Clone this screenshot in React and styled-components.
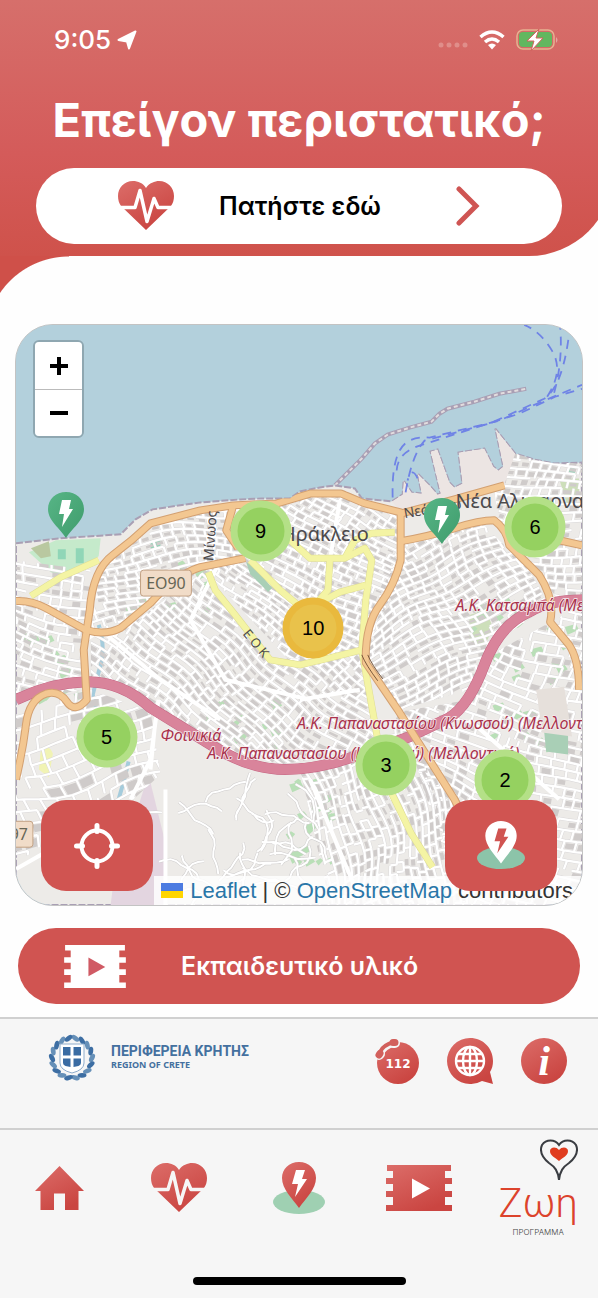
import React from 'react';
import styled, { createGlobalStyle } from 'styled-components';

const GlobalStyle = createGlobalStyle`
    * {
        box-sizing: border-box;
    }

    body {
        margin: 0;
        background: #fefefe;
        font-family: Inter, "Noto Sans", sans-serif;
        overflow-x: hidden;
    }

    button {
        font-family: inherit;
        border: 0;
        padding: 0;
        cursor: pointer;
    }

    svg {
        display: block;
        flex: none;
    }
`;

const Page = styled.div`
    overflow: hidden;
`;

const Header = styled.header`
    margin-right: -15px;
    padding: 0 51px 12px 36px;
    border-bottom-right-radius: 84px;
    background: linear-gradient(#d66f6b, #d45b5a 60%, #cf524b);
`;

const StatusBar = styled.div`
    height: 80px;
    padding: 0 4px 0 18px;
    display: flex;
    align-items: center;
    justify-content: space-between;
    color: #fff;
`;

const StatusGroup = styled.div`
    display: flex;
    align-items: center;
    gap: ${(props) => props.$gap}px;
`;

const Clock = styled.time`
    font-size: 26px;
    font-weight: 500;
    line-height: 32px;
`;

const Title = styled.h1`
    margin: 0;
    height: 88px;
    font-size: 47px;
    line-height: 80px;
    font-weight: 700;
    text-align: center;
    white-space: nowrap;
    color: #fff;
`;

const PillButton = styled.button`
    width: 100%;
    height: 76px;
    border-radius: 38px;
    display: flex;
    align-items: center;
    font-size: 25px;
    line-height: 32px;
    font-weight: 600;
    white-space: nowrap;
    color: ${(props) => (props.$filled ? '#fff' : '#000')};
    background: ${(props) => (props.$filled ? '#d05451' : '#fff')};
    padding: ${(props) => (props.$filled ? '0 46px' : '0 82px')};
    gap: ${(props) => (props.$filled ? 55 : 45)}px;

    & > svg:last-child {
        margin-left: auto;
    }
`;

const Swoop = styled.div`
    width: 84px;
    height: 68px;
    margin-left: -15px;
    background: radial-gradient(circle at 84px 84px, #fefefe 83px, #cf5049 84px);
`;

const Main = styled.main`
    padding: 0 15px 13px;
`;

const MapFrame = styled.section`
    position: relative;
    width: 100%;
    aspect-ratio: 568 / 582;
    border: 1px solid #c3c3c3;
    border-radius: 38px;
    overflow: hidden;
    background: #b3d0dc;

    & > svg {
        width: 100%;
        height: 100%;
    }
`;

const ZoomControl = styled.div`
    position: absolute;
    top: 15px;
    left: 17px;
    width: 51px;
    border: 2px solid #8fa7b1;
    border-radius: 6px;
    overflow: hidden;
`;

const ZoomButton = styled.button`
    width: 100%;
    height: 47px;
    display: flex;
    align-items: center;
    justify-content: center;
    background: #fff;

    & + & {
        border-top: 1px solid #bbb;
    }
`;

const Marker = styled.button`
    position: absolute;
    transform: translate(-50%, -50%);
    background: none;
`;

const Cluster = styled(Marker)`
    width: 61px;
    height: 61px;
    border-radius: 50%;
    border: 7px solid ${(props) => (props.$many ? '#e9b93d' : '#b4e087')};
    background: ${(props) => (props.$many ? '#e9c24b' : '#95d160')};
    font-family: "Liberation Sans", sans-serif;
    font-size: 20px;
    line-height: 47px;
    color: #000;
`;

const Attribution = styled.div`
    position: absolute;
    right: 0;
    bottom: 0;
    height: 29px;
    padding: 0 9px 0 7px;
    display: flex;
    align-items: center;
    gap: 7px;
    background: rgba(255, 255, 255, 0.82);
    font-family: "Liberation Sans", sans-serif;
    font-size: 22px;
    line-height: 28px;
    white-space: nowrap;
    color: #333;

    a {
        color: #2a76a8;
        text-decoration: none;
    }
`;

const MapButton = styled.button`
    position: absolute;
    bottom: 14px;
    ${(props) => props.$side}: 25px;
    width: 112px;
    height: 91px;
    border-radius: 25px;
    display: flex;
    align-items: center;
    justify-content: center;
    background: #d05451;
`;

const PillRow = styled.div`
    padding: 22px 3px 0;
`;

const Footer = styled.footer`
    padding-bottom: 13px;
    background: #f6f6f6;
`;

const Partners = styled.div`
    height: 111px;
    padding: 15px 31px 0 48px;
    border-top: 2px solid #d0d0d0;
    display: flex;
    align-items: flex-start;
    justify-content: space-between;
`;

const Region = styled.a`
    display: flex;
    gap: 15px;
    color: #44709f;
    text-decoration: none;
`;

const RegionText = styled.span`
    display: flex;
    flex-direction: column;
    padding-top: 9px;
    font-weight: 700;
    white-space: nowrap;
`;

const RegionName = styled.span`
    font-family: Roboto, sans-serif;
    font-size: 14px;
    line-height: 16px;
`;

const RegionSub = styled.span`
    font-family: "Noto Sans", sans-serif;
    font-size: 9px;
    line-height: 12px;
`;

const QuickLinks = styled.div`
    display: flex;
    gap: 28px;
    padding-top: 4px;
`;

const Nav = styled.nav`
    height: 149px;
    padding-top: 8px;
    border-top: 2px solid #d0d0d0;
    display: grid;
    grid-template-columns: repeat(5, 1fr);
`;

const NavLink = styled.a`
    height: 100px;
    display: flex;
    align-items: center;
    justify-content: center;
    color: inherit;
    text-decoration: none;
`;

const ZoeMark = styled.span`
    display: flex;
    flex-direction: column;
    align-items: center;
`;

const ZoeHeart = styled.svg`
    align-self: flex-end;
`;

const ZoeName = styled.span`
    font-family: Roboto, sans-serif;
    font-weight: 300;
    font-size: 40px;
    line-height: 46px;
    color: #dc432c;
`;

const ZoeSub = styled.span`
    font-size: 8px;
    line-height: 10px;
    font-weight: 300;
    color: #444;
`;

const HomeIndicator = styled.div`
    width: 213px;
    height: 8px;
    margin: 0 auto;
    border-radius: 4px;
    background: #000;
`;

/* ---------- icons ---------- */

const IconDefs = () => (
  <svg width="0" height="0" style={{ position: 'absolute' }} aria-hidden="true">
    <defs>
      <linearGradient id="red" x1="0" y1="0" x2="0.6" y2="1">
        <stop offset="0" stopColor="#dc6d69" />
        <stop offset="1" stopColor="#ca4541" />
      </linearGradient>
      <linearGradient id="green" x1="0" y1="0" x2="1" y2="1">
        <stop offset="0" stopColor="#57b586" />
        <stop offset="1" stopColor="#3f9c6c" />
      </linearGradient>
    </defs>
  </svg>
);

const HeartPulse = ({ line = '#fff', width = 56 }) => (
  <svg width={width} height="50" viewBox="0 0 56 50">
    <path fill="url(#red)" d="M28 7C31 2 37 0 41 0c9 0 15 7 15 15 0 4-1 7-3 10L28 49 3 25c-2-3-3-6-3-10C0 7 6 0 15 0c5 0 10 2 13 7z" />
    <path fill="none" stroke={line} strokeWidth="3.500" strokeLinejoin="round" d="M0 26.500h17l5-17 7 31 7-23 4 9h16" />
  </svg>
);

const Film = ({ color = 'url(#red)', play = '#fff', width = 66, height = 46 }) => (
  <svg width={width} height={height} viewBox="0 0 66 46">
    <path fill={color} d="M1 0h64v6h-6v7h7v6h-7v7h7v6h-7v8h7v6H0v-6h7v-8H0v-6h7v-7H0v-6h7V6H1z" />
    <path fill={play} d="M26 13.500l18 10-18 10z" />
  </svg>
);

const HomeIcon = () => (
  <svg width="49" height="44" viewBox="0 0 49 44">
    <path fill="url(#red)" d="M24.500 0L49 25h-5.500v19H30V27.500H19V44H5.500V25H0z" />
  </svg>
);

const BoltPin = ({ pin = 'url(#red)', bolt = '#fff', base = '#9fd0b2', width = 52 }) => (
  <svg width={width} height="53" viewBox="0 0 52 53">
    <ellipse cx="26" cy="40" rx="26" ry="12" fill={base} />
    <path fill={pin} d="M26 0c10 0 17 7 17 16 0 11-10 20-17 30C19 36 9 27 9 16 9 7 16 0 26 0z" />
    <path fill={bolt} d="M23 8h9l-3 9h5L22 35l3-13h-6z" />
  </svg>
);

const GreenPin = () => (
  <svg width="36" height="46" viewBox="0 0 36 46">
    <path fill="url(#green)" d="M18 0c10 0 18 7 18 17 0 12-12 19-18 29C12 36 0 29 0 17 0 7 8 0 18 0z" />
    <path fill="#fff" d="M14 8h9l-2 9h4L14 35l2-13h-5z" />
  </svg>
);

const Crosshair = () => (
  <svg width="46" height="46" viewBox="0 0 46 46" fill="none" stroke="#fff" strokeLinecap="round">
    <circle cx="23" cy="23" r="15.500" strokeWidth="4" />
    <path strokeWidth="5" d="M23 2.500v6M23 37.500v6M2.500 23h6M37.500 23h6" />
  </svg>
);

const Phone112 = () => (
  <svg width="46" height="46" viewBox="0 0 46 46">
    <circle cx="25" cy="25" r="21" fill="url(#red)" />
    <g fill="none" strokeLinecap="round">
      <path stroke="#f6f6f6" strokeWidth="10" d="M7 16l-1 1M20 5l2 0" />
      <path stroke="#f6f6f6" strokeWidth="7" d="M7 16Q10 8 21 5" />
      <path stroke="#d2605c" strokeWidth="7" d="M7 15.500l-1 1.500M20 4.500l2 0" />
      <path stroke="#d2605c" strokeWidth="4" d="M7 14Q10 7 21 4" />
    </g>
    <text x="25" y="30" textAnchor="middle" fill="#fff" fontFamily="DejaVu Sans" fontWeight="700" fontSize="12">112</text>
  </svg>
);

const GlobeBubble = () => (
  <svg width="46" height="46" viewBox="0 0 46 46">
    <path fill="url(#red)" d="M23 0c13 0 23 10 23 23 0 4-1 8-3 11l3 12-11-3a23 23 0 0 1-12 3A23 23 0 0 1 23 0z" />
    <g fill="none" stroke="#fff" strokeWidth="2.400">
      <circle cx="23" cy="23" r="14" />
      <ellipse cx="23" cy="23" rx="7" ry="14" />
      <path d="M23 9v28M9 23h28M11 16h24M11 30h24" />
    </g>
  </svg>
);

const InfoIcon = () => (
  <svg width="46" height="46" viewBox="0 0 46 46">
    <circle cx="23" cy="23" r="23" fill="url(#red)" />
    <text x="23" y="37" textAnchor="middle" fill="#fff" fontFamily="Liberation Serif" fontStyle="italic" fontWeight="700" fontSize="42">i</text>
  </svg>
);

const leaves = Array.from({ length: 18 }, (_, i) => 10 + i * 20);

const Emblem = () => (
  <svg width="48" height="48" viewBox="0 0 48 48">
    {leaves.map((angle, i) => (
      <ellipse
        key={angle}
        cx="24"
        cy="4"
        rx="4.500"
        ry="2.400"
        fill={i % 2 ? '#3d6ea3' : '#6690b8'}
        transform={`rotate(${angle} 24 24) rotate(${i > 8 ? -28 : 28} 24 4)`}
      />
    ))}
    <path fill="#fff" stroke="#8eaccb" strokeWidth="1" d="M12 10h24v19q0 7-12 10-12-3-12-10z" />
    <path fill="#3a6ca3" d="M15 13h7.500v8.500H15zM25.500 13H33v8.500h-7.500zM15 24.500h7.500V33l-5-1q-2.500-1-2.500-3zM25.500 24.500H33V29q0 2-2.500 3l-5 1z" />
  </svg>
);

const LocationArrow = () => (
  <svg width="20" height="20" viewBox="0 0 20 20">
    <path fill="#fff" stroke="#fff" strokeWidth="2" strokeLinejoin="round" d="M18.500 1.500L12 18.500l-2-7-8.500-1.500z" />
  </svg>
);

const Wifi = () => (
  <svg width="26" height="20" viewBox="0 0 26 20" fill="none" stroke="#fff" strokeWidth="3.500">
    <path d="M1.500 7Q13-3 24.500 7" />
    <path d="M6 12q7-6 14 0" />
    <path fill="#fff" stroke="none" d="M9 15q4-3 8 0l-4 4.500z" />
  </svg>
);

const Battery = () => (
  <svg width="42" height="22" viewBox="0 0 42 22">
    <rect x="1" y="1" width="37" height="19" rx="6" fill="none" stroke="#e6b291" strokeWidth="1.500" />
    <rect x="3" y="3" width="33" height="15" rx="4" fill="#62b75f" />
    <path fill="#e6a5a0" d="M40 8q3 3 0 6z" />
    <path fill="#fff" stroke="#d2655f" strokeWidth="1" d="M23 0L11 12h7l-3 10L27 9h-7z" />
  </svg>
);

const SignalDots = () => (
  <svg width="30" height="16" viewBox="0 0 30 16" fill="#e08e8a">
    <circle cx="3" cy="13" r="2.500" />
    <circle cx="11" cy="13" r="2.500" />
    <circle cx="19" cy="13" r="2.500" />
    <circle cx="27" cy="13" r="2.500" />
  </svg>
);

const Flag = () => (
  <svg width="22" height="15" viewBox="0 0 22 15">
    <path fill="#4c7be1" d="M0 0h22v8H0z" />
    <path fill="#ffd500" d="M0 8h22v7H0z" />
  </svg>
);

/* ---------- map ---------- */

const makeRandom = (seed) => () => {
  seed = (seed * 16807) % 2147483647;
  return seed / 2147483647;
};

// bends a straight grid a little so that the blocks look like an old town
const warp = (x, y) => [
  x + 5 * Math.sin(y / 31) + 3 * Math.sin((x + y) / 19),
  y + 5 * Math.sin(x / 37) + 3 * Math.cos((x - y) / 23),
];

const pt = (p) => `${p[0].toFixed(1)} ${p[1].toFixed(1)}`;

const makeDistrict = ({ box, angle, w, h, seed, fill }) => {
  const random = makeRandom(seed);
  const [x0, y0, x1, y1] = box;
  const cx = (x0 + x1) / 2;
  const cy = (y0 + y1) / 2;
  const reach = Math.hypot(x1 - x0, y1 - y0) / 2;
  const cos = Math.cos((angle * Math.PI) / 180);
  const sin = Math.sin((angle * Math.PI) / 180);
  const at = (u, v) => warp(cx + u * cos - v * sin, cy + u * sin + v * cos);
  let blocks = '';
  let streets = '';
  for (let v = -reach; v < reach; v += h) {
    const shift = random() * w;
    for (let u = -reach - shift; u < reach; u += w) {
      const p = at(u, v);
      if (p[0] < x0 - w || p[0] > x1 + w || p[1] < y0 - w || p[1] > y1 + w) continue;
      if (random() < fill) {
        const a = 1.5 + random();
        const b = w - 1 - random() * 2;
        const c = h - 1 - random() * 2;
        blocks += `M${pt(at(u + a, v + a))}L${pt(at(u + b, v + a))} ${pt(at(u + b, v + c))} ${pt(at(u + a, v + c))}z`;
      }
      if (random() < 0.85) streets += `M${pt(at(u, v))}L${pt(at(u + w, v))}`;
      if (random() < 0.75) streets += `M${pt(at(u, v))}L${pt(at(u, v + h))}`;
    }
  }
  return { blocks, streets };
};

const districts = [
  { shape: 'M15 560L90 570 85 690 15 700z', box: [15, 555, 92, 700], angle: 12, w: 12, h: 8, seed: 11, fill: 0.5 },
  { shape: 'M100 565L150 520 250 505 245 560 200 570 120 632 90 632z', box: [88, 500, 252, 635], angle: -8, w: 10, h: 7, seed: 23, fill: 0.85 },
  { shape: 'M250 505L345 490 400 515 398 580 366 655 290 662 205 570 240 555z', box: [200, 485, 402, 665], angle: 32, w: 10, h: 7, seed: 37, fill: 0.85 },
  { shape: 'M90 635L120 632 205 570 268 660 366 655 378 750 280 765 220 748 140 700 90 680z', box: [88, 568, 380, 768], angle: 38, w: 12, h: 7, seed: 41, fill: 0.85 },
  { shape: 'M398 545L480 520 530 570 550 605 500 640 470 690 400 710 368 655z', box: [366, 515, 555, 712], angle: -28, w: 11, h: 7, seed: 53, fill: 0.8 },
  { shape: 'M515 453L583 464V600L560 600 500 530 495 490z', box: [492, 450, 585, 604], angle: 8, w: 11, h: 8, seed: 61, fill: 0.7 },
  { shape: 'M500 650L583 605V905H460L400 712 470 700z', box: [398, 603, 585, 905], angle: 18, w: 12, h: 9, seed: 71, fill: 0.4 },
  { shape: 'M300 770L380 750 400 712 460 800 470 905H330z', box: [298, 710, 472, 905], angle: 76, w: 11, h: 7, seed: 83, fill: 0.75 },
  { shape: 'M15 705L90 690 150 712 160 775 100 830 15 860z', box: [15, 690, 165, 865], angle: -14, w: 16, h: 12, seed: 91, fill: 0.25 },
].map((d) => ({ ...d, ...makeDistrict(d) }));

const makeLanes = () => {
  const random = makeRandom(1234);
  let d = '';
  for (let i = 0; i < 34; i += 1) {
    let x = 160 + random() * 160;
    let y = 775 + random() * 120;
    let heading = random() * 6.28;
    d += `M${pt([x, y])}L`;
    for (let j = 0; j < 8; j += 1) {
      heading += (random() - 0.5) * 1.2;
      x += Math.cos(heading) * 6;
      y += Math.sin(heading) * 6;
      d += `${pt([x, y])} `;
    }
  }
  return d;
};

const lanes = makeLanes();

const makeGreens = () => {
  const random = makeRandom(777);
  const zones = [[20, 620, 60, 80], [190, 700, 90, 50], [500, 610, 75, 120], [305, 780, 25, 90], [285, 780, 20, 90], [470, 600, 50, 70], [490, 690, 60, 70], [120, 560, 90, 50]];
  let d = '';
  zones.forEach(([x, y, w, h]) => {
    for (let i = 0; i < 12; i += 1) {
      const px = x + random() * w;
      const py = y + random() * h;
      const s = 4 + random() * 8;
      d += `M${pt([px, py])}l${s.toFixed(1)} -3 3 ${(s / 2).toFixed(1)} -${s.toFixed(1)} 5z`;
    }
  });
  return d;
};

const greens = makeGreens();

const land = 'M15 543L60 538 120 534 135 519 152 509 200 502 240 499 262 498 290 498 300 491 320 487 335 485 355 488 362 498 392 501 403 494 404 480 412 492 422 493 418 473 430 485 438 494 441 493 431 451 438 449 450 482 455 487 463 483 459 452 485 448 494 466 499 470 504 466 496 428 516 453 535 459 555 463 583 462V906H15z';
const port = 'M392 501L403 494 404 480 412 492 422 493 418 473 430 485 438 494 441 493 431 451 438 449 450 482 455 487 463 483 459 452 485 448 494 466 499 470 504 466 496 428 516 453 505 484 455 500 402 512z';
const breakwater = 'M335 485L348 472 362 458 375 443 388 434 410 427 432 421 440 413 448 408 475 401 500 393 527 388';

const mainRoads = [
  'M15 780Q22 750 25 725T45 694Q58 690 66 702T86 700L83 650 89 610Q92 570 112 555T150 523L200 510 233 505 277 503 311 493 341 493 365 503 401 512 401 560Q395 585 380 605T366 663L398 710 455 800 470 830',
  'M15 601Q30 600 45 608L85 630Q105 636 120 628L150 603Q175 575 200 567L245 558',
  'M401 541Q430 536 455 528T495 520Q508 530 510 545L540 575Q556 600 551 622L570 645Q580 660 580 690',
  'M402 513L455 499 505 485',
  'M520 540L560 540 583 545',
  'M233 505L226 530 238 548',
];

const yellowRoads = [
  'M208 572L215 590 235 615 270 660 300 665 330 658 362 650 366 600 372 560 365 548 345 558 310 558 290 540',
  'M250 560L280 590 310 615',
  'M366 585L340 592 315 605 328 590 330 560',
  'M345 558L355 540 372 533 395 532',
  'M362 650L378 740 390 790 412 835 433 868',
  'M30 596L60 577 98 560',
];

const trunk = 'M15 700Q50 683 85 682T150 708L215 748Q250 770 285 770T360 755L410 737 450 718Q470 705 485 665T530 612Q550 600 583 600';

const ferries = [
  'M393 497Q392 465 400 450T430 437L500 420 540 402 583 384',
  'M397 470Q398 452 420 445L470 429 520 413 556 396 583 388',
  'M406 492Q412 455 425 440L490 423 545 398Q565 385 571 324',
  'M418 478Q412 465 408 480M555 392Q564 360 561 324M548 396Q565 370 553 350T525 324',
];

const cityLabel = { fontFamily: 'Noto Sans', fill: '#4c4a4d' };
const trunkLabel = {
  fontFamily: 'Noto Sans',
  fontStyle: 'italic',
  fontSize: 16,
  fill: '#a8324c',
  stroke: '#f7eef0',
  strokeWidth: 1.5,
  paintOrder: 'stroke',
};

const CityMap = () => (
  <svg viewBox="15 324 568 582" preserveAspectRatio="xMidYMid slice" role="img" aria-label="Χάρτης Ηρακλείου">
    <defs>
      <clipPath id="land"><path d={land} /></clipPath>
      {districts.map((d) => (
        <clipPath id={`district-${d.seed}`} key={d.seed}><path d={d.shape} /></clipPath>
      ))}
    </defs>
    <rect x="15" y="324" width="568" height="582" fill="#b3d0dc" />
    <path d={breakwater} fill="none" stroke="#a99fb4" strokeWidth="4" />
    <path d={breakwater} fill="none" stroke="#e2dcde" strokeWidth="2" strokeDasharray="4 3" />
    <path d={land} fill="#edebe8" stroke="#a99fb4" strokeWidth="2" strokeDasharray="7 2" />
    <g clipPath="url(#land)">
      <path d="M148 775L164 840 166 906H110L112 890 140 800z" fill="#e3d5e0" />
      <path d="M28 552L55 540 100 538 98 556 64 577 50 572z" fill="#c5eacb" />
      <path d="M30 548L48 541 50 556 40 558z" fill="#b9c8a0" />
      <path d="M57 549h8v10h-8zM75 548h8v15h-8zM150 540h10v8h-10zM568 468h8v6h-8z" fill="#90d6b7" />
      <path d="M470 615l16-5 8 18-10 20-14-8zM560 478h20v18l-12 8z" fill="#cddfba" />
      <path d="M40 750q8-6 12 4l-4 24-10-8z" fill="#f1f3b4" />
      <path d={greens} fill="#b9dfb7" />
      <path d="M98 625Q106 650 98 672L92 695 98 720M128 762Q124 780 118 800" fill="none" stroke="#a5ccdc" strokeWidth="4" />
      {districts.map((d) => (
        <g key={d.seed} clipPath={`url(#district-${d.seed})`}>
          <path d={d.streets} fill="none" stroke="#d9d7d8" strokeWidth="3.200" />
          <path d={d.blocks} fill="#cfcbca" />
          <path d={d.streets} fill="none" stroke="#fff" strokeWidth="2.300" />
        </g>
      ))}
      <path d="M545 732h24v23l-22-3zM246 562l8 4 18 22-4 4-18-18z" fill="#a9cfb6" />
      <path d="M537 690l28-3 8 50-30-4z" fill="#e6e0db" />
      <path d={lanes} fill="none" stroke="#cfcdcd" strokeWidth="3" />
      <path d={lanes} fill="none" stroke="#fff" strokeWidth="2" />
      <path d="M165 906V790M130 800L150 760 158 700M85 640L100 630 160 680 220 720M110 635L190 575M155 720L150 770M15 870L50 850 80 890M220 560L190 620 225 680 310 700M340 500L330 560M300 700L360 690M310 780L360 900M470 720L560 800" fill="none" stroke="#fff" strokeWidth="4" />
      <path d={port} fill="#ece5e3" />
      {yellowRoads.map((d) => (
        <path key={d} d={d} fill="none" stroke="#dedc93" strokeWidth="7" strokeLinejoin="round" />
      ))}
      {yellowRoads.map((d) => (
        <path key={d} d={d} fill="none" stroke="#f4f4a4" strokeWidth="6" strokeLinejoin="round" />
      ))}
      <path d={trunk} fill="none" stroke="#c56683" strokeWidth="11" />
      <path d={trunk} fill="none" stroke="#d9849b" strokeWidth="10" />
      {mainRoads.map((d) => (
        <path key={d} d={d} fill="none" stroke="#d3a071" strokeWidth="8" strokeLinejoin="round" />
      ))}
      {mainRoads.map((d) => (
        <path key={d} d={d} fill="none" stroke="#f3c791" strokeWidth="6" strokeLinejoin="round" />
      ))}
      <path d="M362 655q4 10 16 26M368 655q4 10 15 24" fill="none" stroke="#7b5a3c" strokeWidth="1" />
    </g>
    {ferries.map((d) => (
      <path key={d} d={d} fill="none" stroke="#6f83e6" strokeWidth="1.800" strokeDasharray="9 7" />
    ))}
    <g stroke="#c2a184" fill="#f1dcc8">
      <rect x="140" y="570" width="51" height="26" rx="3" />
      <rect x="0" y="822" width="32" height="26" rx="3" />
    </g>
    <text x="165.500" y="589" textAnchor="middle" fontFamily="Noto Sans" fontSize="16" fill="#665">EO90</text>
    <text x="27" y="841" textAnchor="end" fontFamily="Noto Sans" fontSize="16" fill="#665">97</text>
    <text x="369" y="541" textAnchor="end" fontSize="20" {...cityLabel}>Ηράκλειο</text>
    <text x="456" y="508" fontSize="20" {...cityLabel}>Νέα Αλικαρνασσός</text>
    <text transform="translate(405 518) rotate(-10)" fontSize="14" {...cityLabel}>Νεάρχου</text>
    <text transform="translate(213 561) rotate(-86)" fontSize="14" {...cityLabel}>Μίνωος</text>
    <text transform="translate(242 634) rotate(50)" fontSize="13" {...cityLabel}>Ε Ο Κ</text>
    <g {...trunkLabel}>
      <text x="456" y="611">Α.Κ. Κατσαμπά (Μελλοντική)</text>
      <text x="297" y="729">Α.Κ. Παπαναστασίου (Κνωσσού) (Μελλοντική)</text>
      <text x="207" y="760">Α.Κ. Παπαναστασίου (Κνωσσού) (Μελλοντική)</text>
      <text x="160" y="741">Φοινικιά</text>
    </g>
  </svg>
);

// left / top in percent of the map
const clusters = [
  { count: 9, left: 43.2, top: 35.5 },
  { count: 6, left: 91.7, top: 34.9 },
  { count: 10, left: 52.5, top: 52.2, many: true },
  { count: 5, left: 16, top: 71 },
  { count: 3, left: 65.4, top: 75.8 },
  { count: 2, left: 86.4, top: 78.5 },
];

const pins = [
  { id: 'west', left: 8.8, top: 32.8 },
  { id: 'port', left: 75.2, top: 33.8 },
];

const place = ({ left, top }) => ({ left: `${left}%`, top: `${top}%` });

export default function App() {
  return (
    <Page>
      <GlobalStyle />
      <IconDefs />
      <Header>
        <StatusBar>
          <StatusGroup $gap={6}>
            <Clock>9:05</Clock>
            <LocationArrow />
          </StatusGroup>
          <StatusGroup $gap={11}>
            <SignalDots />
            <Wifi />
            <Battery />
          </StatusGroup>
        </StatusBar>
        <Title>Επείγον περιστατικό;</Title>
        <PillButton type="button">
          <HeartPulse />
          <span>Πατήστε εδώ</span>
          <svg width="24" height="40" viewBox="0 0 24 40" fill="none" stroke="#cf5553" strokeWidth="5" strokeLinecap="round">
            <path d="M3 3l17 17L3 37" />
          </svg>
        </PillButton>
      </Header>
      <Swoop />
      <Main>
        <MapFrame>
          <CityMap />
          {pins.map((pin) => (
            <Marker key={pin.id} type="button" aria-label="Απινιδωτής" style={place(pin)}>
              <GreenPin />
            </Marker>
          ))}
          {clusters.map((c) => (
            <Cluster key={c.count} type="button" $many={c.many} style={place(c)}>{c.count}</Cluster>
          ))}
          <ZoomControl>
            <ZoomButton type="button" aria-label="Zoom in">
              <svg width="18" height="18" viewBox="0 0 18 18" stroke="#000" strokeWidth="4"><path d="M9 0v18M0 9h18" /></svg>
            </ZoomButton>
            <ZoomButton type="button" aria-label="Zoom out">
              <svg width="18" height="18" viewBox="0 0 18 18" stroke="#000" strokeWidth="4"><path d="M0 9h18" /></svg>
            </ZoomButton>
          </ZoomControl>
          <Attribution>
            <Flag />
            <span>
              <a href="#leaflet">Leaflet</a> | © <a href="#osm">OpenStreetMap</a> contributors
            </span>
          </Attribution>
          <MapButton type="button" $side="left" aria-label="Η θέση μου">
            <Crosshair />
          </MapButton>
          <MapButton type="button" $side="right" aria-label="Κοντινότερος απινιδωτής">
            <BoltPin pin="#fff" bolt="#d05451" base="#8cc4a9" width={48} />
          </MapButton>
        </MapFrame>
        <PillRow>
          <PillButton type="button" $filled>
            <Film color="#fff" play="#d05a64" width={62} height={43} />
            <span>Εκπαιδευτικό υλικό</span>
          </PillButton>
        </PillRow>
      </Main>
      <Footer>
        <Partners>
          <Region href="#crete">
            <Emblem />
            <RegionText>
              <RegionName>ΠΕΡΙΦΕΡΕΙΑ ΚΡΗΤΗΣ</RegionName>
              <RegionSub>REGION OF CRETE</RegionSub>
            </RegionText>
          </Region>
          <QuickLinks>
            <a href="#112" aria-label="112"><Phone112 /></a>
            <a href="#language" aria-label="Γλώσσα"><GlobeBubble /></a>
            <a href="#info" aria-label="Πληροφορίες"><InfoIcon /></a>
          </QuickLinks>
        </Partners>
        <Nav>
          <NavLink href="#home" aria-label="Αρχική"><HomeIcon /></NavLink>
          <NavLink href="#emergency" aria-label="Επείγον"><HeartPulse line="#f6f6f6" /></NavLink>
          <NavLink href="#map" aria-label="Χάρτης"><BoltPin /></NavLink>
          <NavLink href="#videos" aria-label="Εκπαιδευτικό υλικό"><Film /></NavLink>
          <NavLink href="#zoe">
            <ZoeMark>
              <ZoeHeart width="38" height="42" viewBox="0 0 38 42">
                <path fill="none" stroke="#3a3d42" strokeWidth="2" d="M19 6C23 0 32 0 36 6c3 7-1 13-7 18-6 4-9 8-10 17-1-9-4-13-10-17C3 19-1 13 2 6 6 0 15 0 19 6z" />
                <path fill="#e03c1f" d="M19 11c3-4 9-3 9 1 0 5-5 6-9 10-4-4-9-5-9-10 0-4 6-5 9-1z" />
              </ZoeHeart>
              <ZoeName>Ζωη</ZoeName>
              <ZoeSub>ΠΡΟΓΡΑΜΜΑ</ZoeSub>
            </ZoeMark>
          </NavLink>
        </Nav>
        <HomeIndicator />
      </Footer>
    </Page>
  );
}
